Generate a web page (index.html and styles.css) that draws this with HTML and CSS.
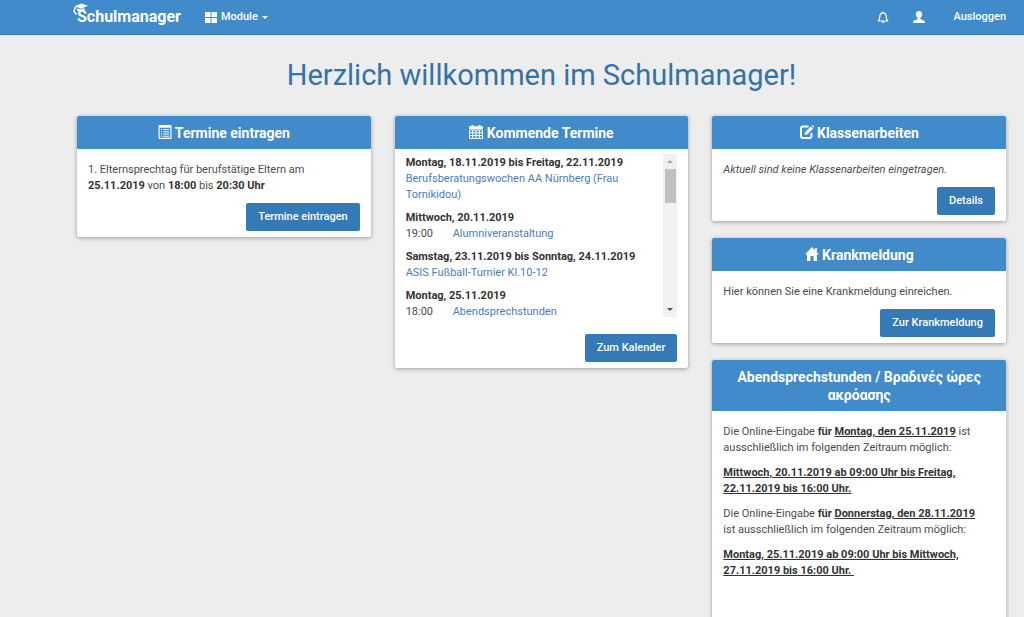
FILE: index.html
```html
<!DOCTYPE html>
<html lang="de">
<head>
<meta charset="utf-8">
<meta name="viewport" content="width=device-width, initial-scale=1">
<title>Schulmanager</title>
<link rel="stylesheet" href="styles.css">
</head>
<body>
<header class="navbar">
  <a class="brand" href="#">
    <svg class="brand-cap" viewBox="0 0 16 14" aria-hidden="true"><path d="M1.500 3.200 8.500.5l6.500 2.200-7 3z" fill="#fff"/><path d="M4 5.500v2c2 1.500 5 1.500 7.500-.5V5L8 6.500z" fill="#fff"/><path d="M2.500 4 1 8.500l2.500 3" fill="none" stroke="#fff" stroke-width="1.500"/></svg>
    Schulmanager</a>
  <button class="nav-item module" type="button">
    <svg width="12" height="11" viewBox="0 0 12 11" aria-hidden="true"><path d="M0 0h5.500v5H0zM6.500 0H12v5H6.500zM0 6h5.500v5H0zM6.500 6H12v5H6.500z" fill="currentColor"/></svg>
    <span>Module</span>
    <svg width="6" height="3" viewBox="0 0 6 3" aria-hidden="true"><path d="M0 0h6L3 3z" fill="currentColor"/></svg>
  </button>
  <nav class="nav-right">
    <button class="nav-item" type="button" aria-label="Benachrichtigungen">
      <svg width="12" height="13" viewBox="0 0 12 13" aria-hidden="true"><path d="M6 .5v1M1.200 10h9.600C9.200 8.500 9.300 7 9.200 5.200 9 3 7.800 1.800 6 1.800S3 3 2.800 5.200C2.700 7 2.800 8.500 1.200 10z" fill="none" stroke="currentColor" stroke-width="1.200" stroke-linejoin="round"/><path d="M4.500 10.500a1.500 1.500 0 0 0 3 0z" fill="currentColor"/></svg>
    </button>
    <button class="nav-item" type="button" aria-label="Profil">
      <svg width="12" height="12" viewBox="0 0 12 12" aria-hidden="true"><path d="M6 0C4 0 2.800 1.300 2.800 3.200c0 1.600.8 2.800 1.800 3.500v1.500L1 9.500Q0 10 0 12h12q0-2-1-2.500L7.400 8.200V6.700c1-.7 1.800-1.900 1.800-3.500C9.200 1.300 8 0 6 0z" fill="currentColor"/></svg>
    </button>
    <a class="nav-item logout" href="#">Ausloggen</a>
  </nav>
</header>

<main class="page">
  <h1 class="welcome">Herzlich willkommen im Schulmanager!</h1>
  <div class="columns">
    <div class="column">
      <section class="card">
        <h2 class="card-head">
          <svg class="icon" viewBox="0 0 14 14" aria-hidden="true"><path d="M1.500 0h11q1 0 1 1v12q0 1-1 1h-11q-1 0-1-1V1q0-1 1-1zM1.700 2.800v10h10.600v-10z" fill="currentColor" fill-rule="evenodd"/><path d="M3 4.500h1.200M3 6.800h1.200M3 9h1.200M3 11.200h1.200M5.300 4.500H11M5.300 6.800H11M5.300 9H11M5.300 11.200H11" stroke="currentColor" stroke-width="1.100"/></svg>
          Termine eintragen</h2>
        <div class="card-body">
          <p>1. Elternsprechtag für berufstätige Eltern am <b>25.11.2019</b> von <b>18:00</b> bis <b>20:30 Uhr</b></p>
          <div class="actions"><button class="btn" type="button">Termine eintragen</button></div>
        </div>
      </section>
    </div>

    <div class="column">
      <section class="card">
        <h2 class="card-head">
          <svg class="icon" viewBox="0 0 14 14" aria-hidden="true"><path d="M0 4V2q0-.7.700-.7H2.500V0H4.500v1.300h5V0h2v1.300h1.800q.7 0 .7.700v2z" fill="currentColor"/><path d="M.5 5h13v8.500H.5zM.5 7.800h13M.5 10.600h13M3.700 5v8.500M7 5v8.500M10.300 5v8.500" fill="none" stroke="currentColor"/></svg>
          Kommende Termine</h2>
        <div class="card-body calendar">
          <div class="scroll-area">
            <div class="events">
              <div class="day"><h3>Montag, 18.11.2019 bis Freitag, 22.11.2019</h3><a href="#">Berufsberatungswochen AA Nürnberg (Frau Tornikidou)</a></div>
              <div class="day"><h3>Mittwoch, 20.11.2019</h3><div class="event"><time>19:00</time><a href="#">Alumniveranstaltung</a></div></div>
              <div class="day"><h3>Samstag, 23.11.2019 bis Sonntag, 24.11.2019</h3><a href="#">ASIS Fußball-Turnier Kl.10-12</a></div>
              <div class="day"><h3>Montag, 25.11.2019</h3><div class="event"><time>18:00</time><a href="#">Abendsprechstunden</a></div></div>
            </div>
            <div class="scrollbar" aria-hidden="true">
              <svg width="6" height="3" viewBox="0 0 6 3"><path d="M0 3h6L3 0z" fill="#a3a3a3"/></svg>
              <span class="thumb"></span>
              <svg class="arrow-down" width="6" height="3" viewBox="0 0 6 3"><path d="M0 0h6L3 3z" fill="#505050"/></svg>
            </div>
          </div>
          <div class="actions"><button class="btn" type="button">Zum Kalender</button></div>
        </div>
      </section>
    </div>

    <div class="column">
      <section class="card">
        <h2 class="card-head">
          <svg class="icon" viewBox="0 0 14 14" aria-hidden="true"><path d="M8.500 1.500H3Q1 1.500 1 3.500V11q0 2 2 2h6.500q2 0 2-2V8" fill="none" stroke="currentColor" stroke-width="1.900"/><path d="M4.500 10 5.300 7 10.800 1.500 13 3.700 7.500 9.200zM11.500.8 12.300 0 14 1.800l-.7.900z" fill="currentColor"/></svg>
          Klassenarbeiten</h2>
        <div class="card-body">
          <p><i>Aktuell sind keine Klassenarbeiten eingetragen.</i></p>
          <div class="actions"><button class="btn" type="button">Details</button></div>
        </div>
      </section>
      <section class="card">
        <h2 class="card-head">
          <svg class="icon" viewBox="0 0 14 14" aria-hidden="true"><path d="M7 0 14 7.500h-2V14H8.600V9H5.400v5H2V7.500H0L7 0zM10 1h2v4l-2-2z" fill="currentColor"/></svg>
          Krankmeldung</h2>
        <div class="card-body">
          <p>Hier können Sie eine Krankmeldung einreichen.</p>
          <div class="actions"><button class="btn" type="button">Zur Krankmeldung</button></div>
        </div>
      </section>
      <section class="card">
        <h2 class="card-head">Abendsprechstunden / Βραδινές ώρες ακρόασης</h2>
        <div class="card-body notice">
          <p>Die Online-Eingabe <b>für</b> <b class="date">Montag, den 25.11.2019</b> ist<br>ausschließlich im folgenden Zeitraum möglich:</p>
          <p><b class="date">Mittwoch, 20.11.2019 ab 09:00 Uhr bis Freitag, 22.11.2019 bis 16:00 Uhr.</b></p>
          <p>Die Online-Eingabe <b>für</b> <b class="date">Donnerstag, den 28.11.2019</b><br>ist ausschließlich im folgenden Zeitraum möglich:</p>
          <p><b class="date">Montag, 25.11.2019 ab 09:00 Uhr bis Mittwoch, 27.11.2019 bis 16:00 Uhr.&nbsp;</b></p>
        </div>
      </section>
    </div>
  </div>
</main>
</body>
</html>
```
FILE: styles.css
```css
* { box-sizing: border-box; }
html { height: 100%; overflow: hidden; }
body {
  margin: 0;
  background: #ededed;
  color: #4c4c4c;
  font: 11px/16px Roboto, "Noto Sans", sans-serif;
}
h1, h2, h3, p { margin: 0; }
a { color: #4a7ebb; text-decoration: none; }
button { font: inherit; border: 0; cursor: pointer; }
b, h3 { color: #333; font-weight: 700; }

.navbar {
  display: flex;
  align-items: center;
  height: 35px;
  padding: 0 18px 0 77px;
  background: #428bca;
  border-bottom: 1px solid #3579b5;
}
.brand {
  position: relative;
  color: #fff;
  font-size: 16px;
  font-weight: 700;
}
.brand-cap {
  position: absolute;
  left: -4px;
  top: -6px;
  width: 16px;
  height: 14px;
}
.nav-item {
  display: flex;
  align-items: center;
  gap: 4px;
  padding: 0;
  background: none;
  color: #fff;
  font-weight: 500;
}
.module { margin-left: 24px; }
.nav-right {
  display: flex;
  align-items: center;
  gap: 24px;
  margin-left: auto;
}
.logout { margin-left: 4px; }

.page { padding: 20px 18px 0 77px; }
.welcome {
  color: #3572a8;
  font-size: 29px;
  font-weight: 400;
  line-height: 40px;
  text-align: center;
}
.columns {
  display: grid;
  grid-template-columns: repeat(3, 1fr);
  gap: 24px;
  margin-top: 21px;
}
.column {
  display: flex;
  flex-direction: column;
  gap: 17px;
}
.card {
  background: #fff;
  border-radius: 2px;
  box-shadow: 0 1px 4px rgba(0, 0, 0, .35);
}
.card-head {
  padding: 8px 24px 7px;
  background: #428bca;
  border-radius: 2px 2px 0 0;
  color: #fff;
  font-size: 14px;
  font-weight: 700;
  line-height: 18px;
  text-align: center;
}
.icon {
  width: 14px;
  height: 14px;
  vertical-align: -1px;
}
.card-body { padding: 13px 11px 6px; }
.actions {
  display: flex;
  justify-content: flex-end;
  margin-top: 9px;
}
.btn {
  padding: 6px 12px;
  background: #337ab7;
  border-radius: 2px;
  color: #fff;
  font-weight: 500;
}
.calendar { padding-top: 5px; }
.scroll-area {
  display: flex;
  justify-content: space-between;
  height: 163px;
  overflow: hidden;
}
.events { width: 244px; }
.day { margin-bottom: 6px; }
.day h3 {
  font-size: inherit;
  line-height: 17px;
  white-space: nowrap;
}
.event { display: flex; }
.event time { width: 47px; }
.scrollbar {
  display: flex;
  flex-direction: column;
  align-items: center;
  width: 14px;
  padding: 6px 0;
  background: #f1f1f1;
}
.thumb {
  width: 11px;
  height: 34px;
  margin-top: 6px;
  background: #c1c1c1;
}
.arrow-down { margin-top: auto; }
.calendar .actions { margin-top: 17px; }
.notice { padding-bottom: 60px; }
.notice p + p { margin-top: 9px; }
.date { text-decoration: underline; }
```
